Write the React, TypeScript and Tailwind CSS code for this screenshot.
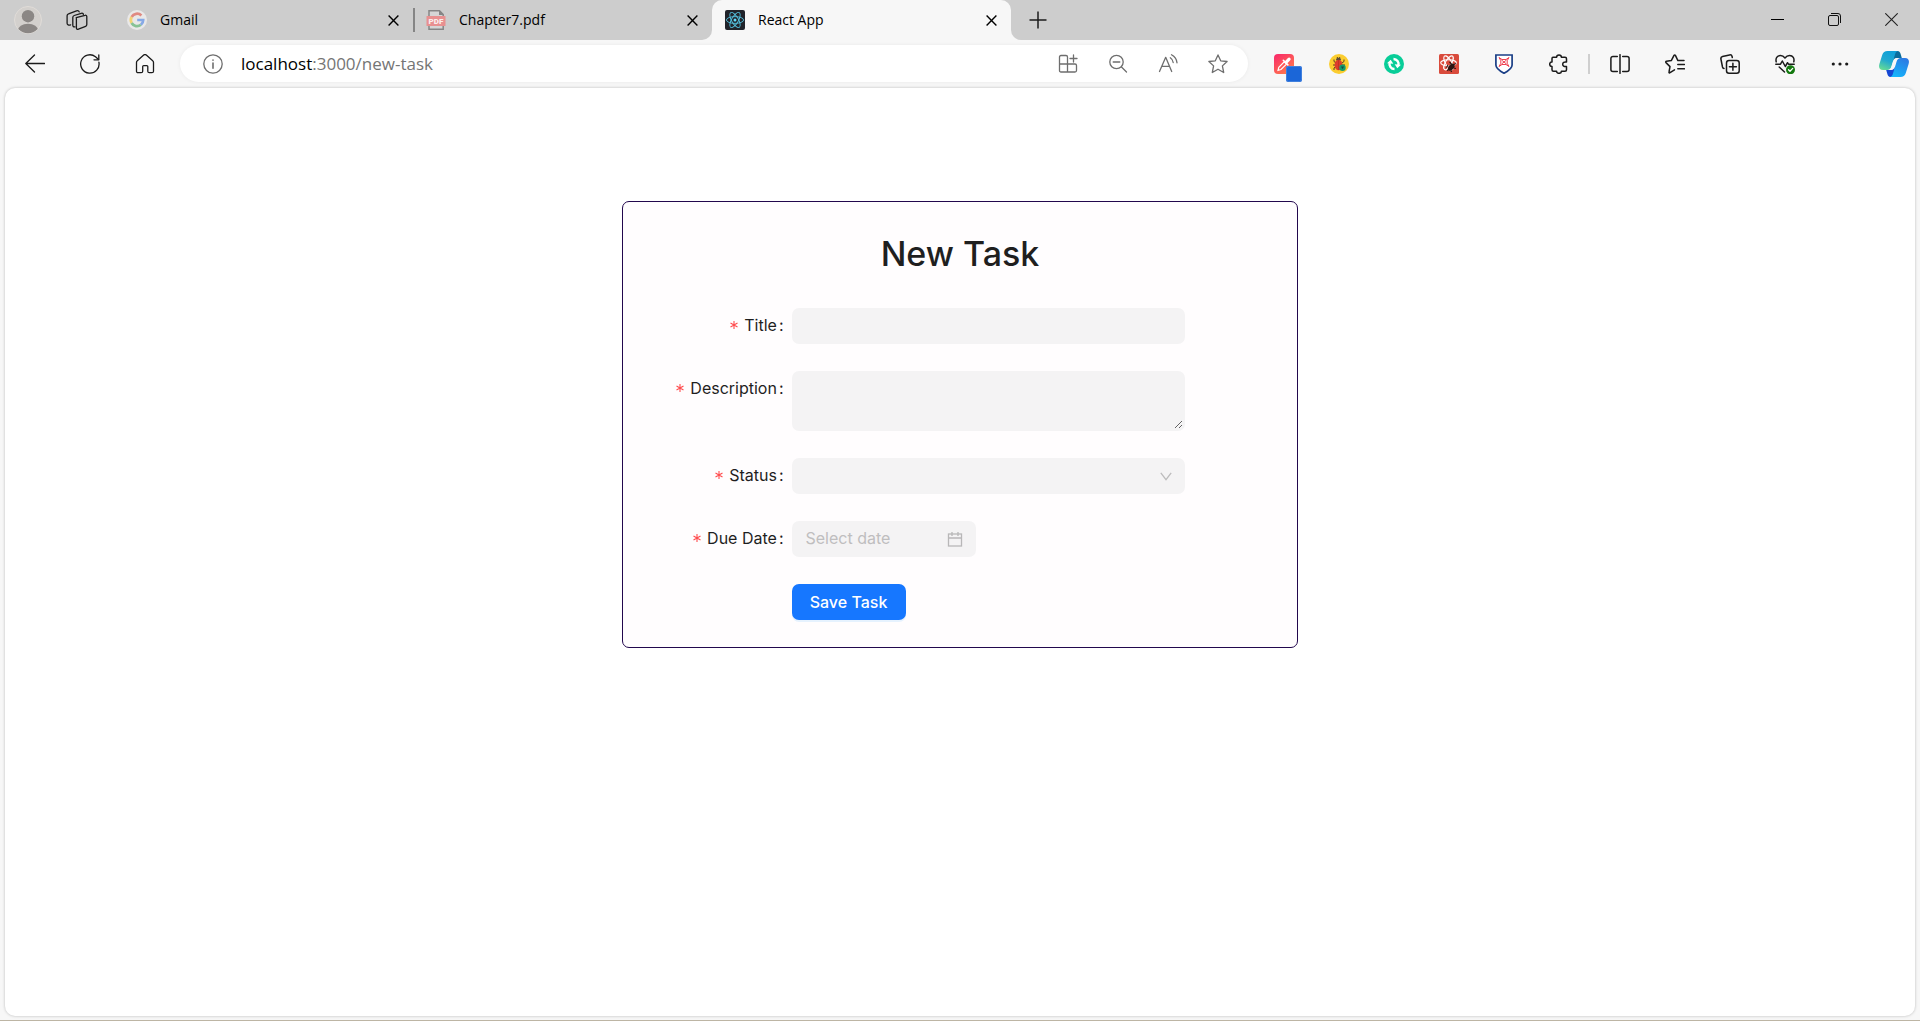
import type { ReactNode } from "react";

const LINE = {
  fill: "none",
  stroke: "currentColor",
  strokeWidth: 1.3,
  strokeLinecap: "round" as const,
  strokeLinejoin: "round" as const,
};

function Icon({ children, size = 20 }: { children: ReactNode; size?: number }) {
  return (
    <svg width={size} height={size} viewBox="0 0 20 20" aria-hidden="true" {...LINE}>
      {children}
    </svg>
  );
}

function ProfileIcon() {
  return (
    <svg width="28" height="28" viewBox="0 0 28 28" aria-hidden="true">
      <defs>
        <clipPath id="avatar">
          <circle cx="14" cy="14" r="13.2" />
        </clipPath>
      </defs>
      <circle cx="14" cy="14" r="13.5" fill="#d3d0cd" stroke="#e0dcd8" />
      <g clipPath="url(#avatar)" fill="#8b8785">
        <circle cx="14" cy="10.2" r="6.2" />
        <ellipse cx="14" cy="25" rx="10.3" ry="7.3" />
      </g>
    </svg>
  );
}

function WorkspacesIcon() {
  return (
    <svg width="22" height="22" viewBox="0 0 22 22" aria-hidden="true" {...LINE}>
      <path d="M10.2 8.7 19 6.3c1-.3 1.8.3 1.8 1.3v8c0 .8-.4 1.400-1.2 1.700l-7.200 2.900c-1.100.4-2-.1-2-1.300v-8.500c0-.9 0-1.500-.2-1.700Z" />
      <path d="M9 17.800c-1.400.3-2.200-.3-2.200-1.500V8.500c0-1 .4-1.700 1.400-2l7-2.200c1.200-.3 2 .1 2.200 1" />
      <path d="M4.600 15.800c-2 .7-3.500 0-3.500-1.600V6.800c0-1 .4-1.700 1.400-2l8-2.900c1.200-.4 2.300-.1 2.700 1" />
    </svg>
  );
}

function GoogleIcon() {
  return (
    <svg width="20" height="20" viewBox="0 0 20 20" aria-hidden="true">
      <circle cx="10" cy="10" r="10" fill="#e9e8e8" />
      <g fill="none" strokeWidth="2.7">
        <path d="M14.400 5.500A6.200 6.200 0 0 0 4.600 7" stroke="#e08a82" />
        <path d="M4.600 7a6.200 6.200 0 0 0 0 6" stroke="#f3d376" />
        <path d="M4.600 13a6.200 6.200 0 0 0 9.300 1.800" stroke="#87c295" />
        <path d="M13.900 14.800A6.200 6.200 0 0 0 16.200 10H10.200" stroke="#86a9e6" />
      </g>
    </svg>
  );
}

function PdfIcon() {
  return (
    <svg width="20" height="20" viewBox="0 0 20 20" aria-hidden="true">
      <path d="M3 .8h10.500l3.700 3.700v14.700H3Z" fill="#d6d6d6" stroke="#858585" strokeWidth="1.500" />
      <path d="M13 .5v4.500h4.500Z" fill="#858585" />
      <rect x="0.500" y="6" width="19" height="10" rx="0.600" fill="#e89090" />
      <text
        x="10"
        y="13.800"
        textAnchor="middle"
        fontFamily="Roboto, sans-serif"
        fontSize="8"
        fontWeight="900"
        fill="#fbeeee"
      >
        PDF
      </text>
    </svg>
  );
}

function ReactIcon() {
  return (
    <svg width="20" height="20" viewBox="0 0 20 20" aria-hidden="true">
      <rect width="20" height="20" rx="2" fill="#20232a" />
      <circle cx="10" cy="10" r="1.500" fill="#61dafb" />
      <g fill="none" stroke="#54bfdc" strokeWidth="0.900">
        <ellipse cx="10" cy="10" rx="8.600" ry="3.400" />
        <ellipse cx="10" cy="10" rx="8.600" ry="3.400" transform="rotate(60 10 10)" />
        <ellipse cx="10" cy="10" rx="8.600" ry="3.400" transform="rotate(120 10 10)" />
      </g>
    </svg>
  );
}

function EyedropperIcon() {
  return (
    <svg width="28" height="28" viewBox="0 0 28 28" aria-hidden="true">
      <defs>
        <linearGradient id="picker" x1="0" y1="0" x2="0.700" y2="1">
          <stop offset="0" stopColor="#f9266c" />
          <stop offset="1" stopColor="#ff7a4c" />
        </linearGradient>
      </defs>
      <rect width="20" height="20" rx="4" fill="url(#picker)" />
      <path d="m4 16.300.8-3 5.400-5.500 2.300 2.300-5.500 5.400Z" fill="none" stroke="#fff" strokeWidth="1.200" />
      <path d="m9.300 6.300 4.600 4.600" fill="none" stroke="#fff" strokeWidth="1.600" strokeLinecap="round" />
      <path d="m12.500 7.800 2.600-2.600" fill="none" stroke="#fff" strokeWidth="3.200" strokeLinecap="round" />
      <rect x="12" y="12" width="16" height="16" rx="2" fill="#1b66d8" />
      <rect x="12.500" y="12.500" width="15" height="15" rx="2" fill="none" stroke="#5a92e3" strokeWidth="0.600" />
    </svg>
  );
}

function BugIcon() {
  return (
    <svg width="20" height="20" viewBox="0 0 20 20" aria-hidden="true">
      <circle cx="10" cy="10" r="10" fill="#fbcd2f" />
      <path
        d="M5 5.500v2L7 9M15 5.500v2L13 9M4 11h3M16 11h-3M5 16v-2l2-1.500M8 3l1 1.500M11 3l-1 1.500"
        stroke="#5a4320"
        strokeWidth="1"
        fill="none"
      />
      <ellipse cx="9.500" cy="5.400" rx="2.500" ry="1.700" fill="#5a4a3a" />
      <ellipse cx="9.500" cy="11" rx="3.900" ry="5.200" fill="#dd3c2c" />
      <path d="M9.500 6v10" stroke="#b52f22" strokeWidth="0.700" />
      <circle cx="13.500" cy="13.800" r="3.200" fill="#159a6c" />
      <path d="m12 12.500 1.500 2.800 1.500-2.800Z" fill="#134d48" />
    </svg>
  );
}

function SyncIcon() {
  return (
    <svg width="20" height="20" viewBox="0 0 20 20" aria-hidden="true">
      <circle cx="10" cy="10" r="10" fill="#08cd98" />
      <path
        d="M10.500 15A5 5 0 0 1 5.700 8.500M9.500 5A5 5 0 0 1 14.300 11.500"
        fill="none"
        stroke="#fff"
        strokeWidth="2.400"
      />
      <path d="m3 9.200 3.700-3.400 2.600 3.900ZM17 10.800l-3.700 3.400-2.600-3.900Z" fill="#fff" />
    </svg>
  );
}

function ReactDevIcon() {
  return (
    <svg width="20" height="20" viewBox="0 0 20 20" aria-hidden="true">
      <rect width="20" height="20" rx="1.500" fill="#d94b3c" />
      <g fill="none" stroke="#fff" strokeWidth="1.100">
        <ellipse cx="9.500" cy="8.800" rx="7.800" ry="3" />
        <ellipse cx="9.500" cy="8.800" rx="7.800" ry="3" transform="rotate(60 9.500 8.800)" />
        <ellipse cx="9.500" cy="8.800" rx="7.800" ry="3" transform="rotate(120 9.500 8.800)" />
      </g>
      <ellipse cx="12.300" cy="13.200" rx="2.600" ry="4" transform="rotate(40 12.300 13.200)" fill="#2a1614" />
      <path
        d="m9 11-1.500 2.500M10 14l-1.500 3M12.500 10l-2-2M14 11l3-1.500M14.500 14l2.500.5M12 16.500l.5 1.500"
        stroke="#2a1614"
        strokeWidth="1.200"
        fill="none"
      />
    </svg>
  );
}

function ShieldIcon() {
  return (
    <svg width="20" height="20" viewBox="0 0 20 20" aria-hidden="true">
      <path
        d="M1.900 1h16.200v10c0 3.800-3.900 6-8.100 8.300C5.800 17 1.900 14.800 1.900 11Z"
        fill="#fff"
        stroke="#1b3f86"
        strokeWidth="1.700"
      />
      <path
        d="m5 3.500 3 2h4l3-2-1.800 3.200v2.600L15 12.500l-3-2H8l-3 2 1.800-3.200V6.700ZM7.500 6l5 4M12.500 6l-5 4"
        fill="none"
        stroke="#ee3f50"
        strokeWidth="1"
      />
    </svg>
  );
}

function CopilotIcon() {
  return (
    <svg width="30" height="26" viewBox="0 0 30 26" aria-hidden="true">
      <defs>
        <linearGradient id="copilotLeft" x1="0.600" y1="0" x2="0.200" y2="1">
          <stop offset="0" stopColor="#0f9fd8" />
          <stop offset="0.500" stopColor="#22a9d0" />
          <stop offset="1" stopColor="#67dc93" />
        </linearGradient>
        <linearGradient id="copilotRight" x1="0.800" y1="0" x2="0.300" y2="1">
          <stop offset="0" stopColor="#2d78e2" />
          <stop offset="1" stopColor="#14b5fb" />
        </linearGradient>
      </defs>
      <path d="M14 0h4.500c2 0 2.700 1.300 3.300 3.400L22.800 7H18c-2 0-3 1-3.700 3Z" fill="#0a6c9c" />
      <path d="M16 26h-4.500c-2 0-2.700-1.300-3.300-3.400L7.200 19H12c2 0 3-1 3.700-3Z" fill="#1547d4" />
      <path
        d="M8.500 0H19c-1.800.3-2.500 1.800-3 3.500l-3.600 12c-.7 2.300-2 3.500-4.200 3.500H4c-3.500 0-4.600-2.500-3.600-6L3.200 4C4 1.300 5.800 0 8.500 0Z"
        fill="url(#copilotLeft)"
      />
      <path
        d="M21.500 26H11c1.800-.3 2.500-1.800 3-3.500l3.600-12C18.300 8.200 19.600 7 21.800 7H26c3.500 0 4.600 2.500 3.600 6l-2.800 9c-.8 2.700-2.600 4-5.300 4Z"
        fill="url(#copilotRight)"
      />
      <path d="M18.500 7c-2.300 0-3.500 1-4.200 3l-2 6.300c-.5 1.500-1 2.300-1.800 2.700 2.600.2 4-.8 4.800-3l2-6.300c.5-1.500 1.200-2.300 2.200-2.700Z" fill="#f7f7f7" />
    </svg>
  );
}

function CloseIcon() {
  return (
    <svg width="11" height="11" viewBox="0 0 11 11" aria-hidden="true">
      <path d="m.6.6 9.800 9.800M10.400.6.6 10.400" stroke="currentColor" strokeWidth="1.400" fill="none" />
    </svg>
  );
}

function Tab({ icon, label, active = false }: { icon: ReactNode; label: string; active?: boolean }) {
  return (
    <div
      className={
        active
          ? "relative flex h-10 w-[299px] items-center rounded-t-[10px] bg-[#f7f7f7] pr-[10px] pl-[13px]"
          : "flex h-10 w-[299px] items-center pr-[10px] pl-[13px]"
      }
    >
      {active && (
        <>
          <span className="absolute bottom-0 -left-2.5 size-2.5 bg-[#f7f7f7]">
            <span className="block size-2.5 rounded-br-[10px] bg-[#cdcdcd]" />
          </span>
          <span className="absolute -right-2.5 bottom-0 size-2.5 bg-[#f7f7f7]">
            <span className="block size-2.5 rounded-bl-[10px] bg-[#cdcdcd]" />
          </span>
        </>
      )}
      {icon}
      <span className="ml-[13px] flex-1 pb-px text-sm text-black">{label}</span>
      <button type="button" aria-label={`Close ${label}`} className="grid size-5 place-items-center text-black">
        <CloseIcon />
      </button>
    </div>
  );
}

function ToolButton({ label, wide = true, children }: { label: string; wide?: boolean; children: ReactNode }) {
  return (
    <button
      type="button"
      aria-label={label}
      className={wide ? "grid h-9 w-[55px] place-items-center" : "grid h-9 w-[50px] place-items-center"}
    >
      {children}
    </button>
  );
}

function TabStrip() {
  return (
    <header className="flex h-10 items-center bg-[#cdcdcd] text-[#1b1b1b]">
      <button type="button" aria-label="Profile" className="grid h-10 w-14 place-items-center">
        <ProfileIcon />
      </button>
      <button type="button" aria-label="Workspaces" className="mr-4 grid h-10 w-[42px] place-items-center">
        <WorkspacesIcon />
      </button>
      <Tab icon={<GoogleIcon />} label="Gmail" />
      <span className="-mr-0.5 h-6 w-0.5 bg-[#858585]" />
      <Tab icon={<PdfIcon />} label="Chapter7.pdf" />
      <Tab icon={<ReactIcon />} label="React App" active />
      <button type="button" aria-label="New tab" className="grid h-10 w-[54px] place-items-center">
        <svg width="18" height="18" viewBox="0 0 18 18" aria-hidden="true">
          <path d="M9 .5v17M.5 9h17" stroke="currentColor" strokeWidth="1.500" />
        </svg>
      </button>
      <div className="ml-auto flex pb-0.5">
        <button type="button" aria-label="Minimize" className="grid h-9 w-[57px] place-items-center">
          <span className="h-px w-[13px] bg-black" />
        </button>
        <button type="button" aria-label="Restore" className="grid h-9 w-[57px] place-items-center">
          <svg width="13" height="13" viewBox="0 0 13 13" fill="none" stroke="#111" aria-hidden="true">
            <rect x="0.500" y="2.500" width="10" height="10" rx="1.500" />
            <path d="M3 .5h7A2.500 2.500 0 0 1 12.500 3v7" />
          </svg>
        </button>
        <button type="button" aria-label="Close window" className="grid h-9 w-[57px] place-items-center">
          <svg width="13" height="13" viewBox="0 0 13 13" aria-hidden="true">
            <path d="m.3.3 12.400 12.400M12.700.3.3 12.700" stroke="#222" strokeWidth="1.100" />
          </svg>
        </button>
      </div>
    </header>
  );
}

function Toolbar() {
  return (
    <nav className="flex items-center bg-[#f7f7f7] pt-[5px] pb-[6px] pl-[7px] text-[#1b1b1b]">
      <ToolButton label="Back">
        <Icon>
          <path d="M9.500 1 .8 9.500l8.700 8.500M1 9.500h18.500" />
        </Icon>
      </ToolButton>
      <ToolButton label="Refresh">
        <Icon>
          <path d="M18.900 8.200A9.200 9.200 0 1 1 15.500 2.700l3 2.700" />
          <path d="M18.800 1v4.800H14" />
        </Icon>
      </ToolButton>
      <ToolButton label="Home">
        <Icon>
          <path d="M1.500 8.400c0-.7.300-1.300.8-1.700l6.400-5.600c.8-.7 1.800-.7 2.600 0l6.400 5.600c.5.4.8 1 .8 1.700v8.800c0 .9-.6 1.500-1.500 1.500h-2.700c-.9 0-1.500-.6-1.500-1.500v-4.600c0-.6-.4-1-1-1H8.700c-.6 0-1 .4-1 1v4.600c0 .9-.6 1.500-1.500 1.500H3c-.9 0-1.500-.6-1.500-1.500Z" />
        </Icon>
      </ToolButton>

      <div className="ml-2 flex h-[37px] min-w-0 flex-1 items-center rounded-full bg-white pr-[5px] pl-[23px] text-[#6e6e6e] shadow-[0_0_4px_rgba(0,0,0,0.06)]">
        <button type="button" aria-label="View site information">
          <Icon>
            <circle cx="10" cy="10" r="9.200" />
            <path d="M10 9v5.200M10 6v.2" strokeWidth="1.600" />
          </Icon>
        </button>
        <div className="ml-[18px] flex-1 text-[17px] leading-6 text-[#757575]">
          <span className="text-black">localhost</span>:3000/new-task
        </div>
        <ToolButton label="Apps" wide={false}>
          <Icon>
            <path d="M1.500 3c0-1 .5-1.500 1.500-1.500h5c1 0 1.500.5 1.500 1.500v7h-8ZM1.500 10h8v8H3c-1 0-1.500-.5-1.500-1.500ZM9.500 10H17c1 0 1.500.5 1.500 1.500v5c0 1-.5 1.500-1.500 1.500H9.500ZM15.500 1v7M12 4.500h7" />
          </Icon>
        </ToolButton>
        <ToolButton label="Zoom out" wide={false}>
          <Icon>
            <circle cx="8.500" cy="8" r="6.700" />
            <path d="M5.200 8h6.600M13.500 13l5 5" />
          </Icon>
        </ToolButton>
        <ToolButton label="Read aloud" wide={false}>
          <Icon>
            <path d="M1.500 17.500 7.700 3.300 13.700 17.500M3.800 12.300h7.700" />
            <path d="M12.300 3.800c1.600 1 2.600 2.500 2.900 4.700M13.500.8c3.200 1.700 5.200 4.500 5.500 8" />
          </Icon>
        </ToolButton>
        <ToolButton label="Favorite" wide={false}>
          <Icon>
            <path d="m10 .9 2.700 5.900 6.400.7-4.700 4.400 1.300 6.600L10 15.200l-5.700 3.300 1.300-6.600L.9 7.500l6.400-.7Z" />
          </Icon>
        </ToolButton>
      </div>

      <div className="ml-2 flex items-center">
        <ToolButton label="Color picker">
          <span className="mt-2 ml-2">
            <EyedropperIcon />
          </span>
        </ToolButton>
        <ToolButton label="Bug finder">
          <BugIcon />
        </ToolButton>
        <ToolButton label="Sync">
          <SyncIcon />
        </ToolButton>
        <ToolButton label="Component inspector">
          <ReactDevIcon />
        </ToolButton>
        <ToolButton label="Shield">
          <ShieldIcon />
        </ToolButton>
        <ToolButton label="Extensions">
          <Icon>
            <path
              strokeWidth="1.500"
              d="M4 3.300h3.600c0-1.500 1-2.400 2.400-2.400s2.400.9 2.400 2.400H16c.9 0 1.500.6 1.500 1.500v3.300c-2.500-.4-3.800.7-3.800 2.200s1.300 2.600 3.800 2.200v3.200c0 .9-.6 1.500-1.500 1.500h-3.600c0 1.300-1 2.100-2.400 2.100s-2.400-.8-2.400-2.100H4.500c-.9 0-1.500-.6-1.500-1.500v-3.200c-1.500 0-2.300-1-2.300-2.200S1.500 8.100 3 8.100V4.500c0-.7.300-1.200 1-1.200Z"
            />
          </Icon>
        </ToolButton>
        <span className="mx-0.5 h-5 w-0.5 bg-[#cfcfcf]" />
        <ToolButton label="Split screen">
          <Icon>
            <path
              strokeWidth="1.500"
              d="M7.300 2.500H3C1.700 2.500.9 3.300.9 4.500v11c0 1.200.8 2 2.100 2h4.300M12.700 2.500H17c1.300 0 2.100.8 2.100 2v11c0 1.200-.8 2-2.100 2h-4.300M10 .7v18.600"
            />
          </Icon>
        </ToolButton>
        <ToolButton label="Favorites">
          <Icon>
            <path
              strokeWidth="1.500"
              d="M9.500 15.800 5 18.700c-.6.4-1.200 0-1-.7l1-5.400L1 8.600c-.5-.6-.3-1.200.5-1.300L6.300 6.600 9 1.400c.4-.7 1-.7 1.400 0l2.500 5.200H19M12.800 10.500h6.700M12.800 14.800h6.700"
            />
          </Icon>
        </ToolButton>
        <ToolButton label="Collections">
          <Icon>
            <rect x="6.500" y="6.500" width="12.700" height="12.700" rx="2.500" strokeWidth="1.500" />
            <path
              strokeWidth="1.500"
              d="M12.900 9.300v7M9.400 12.800h7M4 14.500c-.8-.1-1.300-.7-1.500-1.500L.9 5c-.2-1.200.3-2.200 1.600-2.500l7-1.600c1.300-.3 2.300.4 2.600 1.600l.2 1"
            />
          </Icon>
        </ToolButton>
        <ToolButton label="Browser essentials">
          <Icon>
            <path
              strokeWidth="1.500"
              d="M1.200 7.800C.4 4.500 2 1.500 5.400 1.500c2 0 3.400.9 4.600 2.500 1.200-1.600 2.600-2.500 4.600-2.500 3.400 0 5 3 4.200 6.300M.8 10.200h4.700L7.300 7l3 5.500 2.200-3.800 1 1.500h5.700M4.200 13l5.300 5"
            />
            <circle cx="15.500" cy="15.700" r="4.500" fill="#13790f" stroke="none" />
            <path d="m13.500 15.800 1.500 1.500 2.700-2.900" stroke="#fff" />
          </Icon>
        </ToolButton>
        <ToolButton label="Settings and more">
          <svg width="18" height="4" viewBox="0 0 18 4" fill="currentColor" aria-hidden="true">
            <circle cx="2.300" cy="2" r="1.600" />
            <circle cx="9" cy="2" r="1.600" />
            <circle cx="15.700" cy="2" r="1.600" />
          </svg>
        </ToolButton>
        <button type="button" aria-label="Copilot" className="grid h-9 w-[53px] place-items-center">
          <CopilotIcon />
        </button>
      </div>
    </nav>
  );
}

function FormRow({ id, label, children }: { id: string; label: string; children: ReactNode }) {
  return (
    <div className="flex items-start">
      <label htmlFor={id} className="flex h-9 w-1/4 items-center justify-end pr-2 pb-0.5 text-base whitespace-nowrap">
        <svg width="8" height="8" viewBox="0 0 8 8" className="mr-1.5" aria-hidden="true">
          <path d="M4 0v8M.5 2l7 4M7.500 2l-7 4" stroke="#ff4d4f" strokeWidth="1.100" />
        </svg>
        {label}
        <span className="ml-0.5">:</span>
      </label>
      <div className="w-7/12">{children}</div>
    </div>
  );
}

function TaskForm() {
  return (
    <form
      onSubmit={(event) => event.preventDefault()}
      className="w-full max-w-[676px] rounded-[7px] border border-[#22074d] bg-[#fffdfe] pt-[30px] pb-[27px] font-[Inter,sans-serif] text-[#1f1f1f]"
    >
      <h1 className="mb-8 text-center text-[34px] leading-[44px] font-medium">New Task</h1>
      <div className="flex flex-col gap-[27px]">
        <FormRow id="title" label="Title">
          <input id="title" type="text" className="block h-9 w-full rounded-[7px] bg-[#f4f3f4] px-3 outline-none" />
        </FormRow>
        <FormRow id="description" label="Description">
          <textarea
            id="description"
            className="block h-[60px] w-full resize-y rounded-[7px] border-2 border-[#f4f3f4] bg-[#f4f3f4] px-3 py-1 outline-none"
          />
        </FormRow>
        <FormRow id="status" label="Status">
          <div className="relative">
            <select
              id="status"
              defaultValue=""
              className="block h-9 w-full appearance-none rounded-[7px] bg-[#f4f3f4] px-3 outline-none"
            >
              <option value="" />
            </select>
            <svg
              width="12"
              height="9"
              viewBox="0 0 12 9"
              className="pointer-events-none absolute top-3.5 right-[13px]"
              aria-hidden="true"
            >
              <path d="M.8.8 6 7.600 11.200.8" fill="none" stroke="#bcbbbc" strokeWidth="1.300" />
            </svg>
          </div>
        </FormRow>
        <FormRow id="due-date" label="Due Date">
          <div className="flex h-9 w-[184px] items-center rounded-[7px] bg-[#f4f3f4] pr-[13px] pl-3.5">
            <input
              id="due-date"
              type="text"
              placeholder="Select date"
              className="min-w-0 flex-1 pb-0.5 text-base outline-none placeholder:text-[#bfbebf]"
            />
            <svg
              width="16"
              height="16"
              viewBox="0 0 16 16"
              fill="none"
              stroke="#b8b7b8"
              strokeWidth="1.300"
              aria-hidden="true"
            >
              <rect x="1.500" y="3" width="13" height="12" />
              <path d="M1.500 7h13M5 1v4M11 1v4" />
            </svg>
          </div>
        </FormRow>
        <div className="flex">
          <div className="w-1/4" />
          <button
            type="submit"
            className="h-9 w-[114px] rounded-[7px] bg-[#1677ff] text-base font-medium whitespace-nowrap text-white shadow-[0_2px_0_rgba(5,145,255,0.1)]"
          >
            Save Task
          </button>
        </div>
      </div>
    </form>
  );
}

export default function App() {
  return (
    <div className="flex min-h-screen flex-col border-b border-[#bdb5a4] bg-[#f7f7f7] font-['Open_Sans','Noto_Sans',sans-serif]">
      <TabStrip />
      <Toolbar />
      <main className="mx-[5px] mb-1 flex flex-1 flex-col items-center rounded-[10px] bg-white pt-[113px] shadow-[0_0_3px_rgba(0,0,0,0.25)]">
        <TaskForm />
      </main>
    </div>
  );
}
